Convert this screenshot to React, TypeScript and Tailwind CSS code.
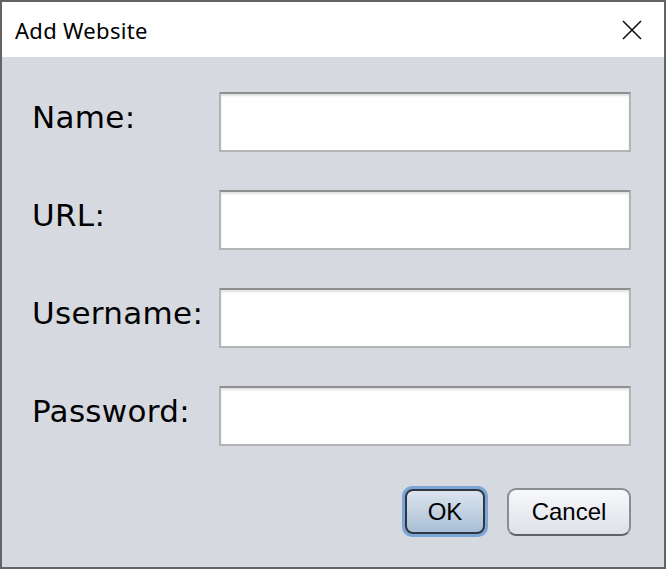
import React, { useState } from 'react';

const fields = ['Name:', 'URL:', 'Username:', 'Password:'];

const App: React.FC = () => {
  const [values, setValues] = useState<string[]>(['', '', '', '']);

  return (
    <div className="w-[666px] h-[569px] flex flex-col border-2 border-[#646464] bg-[#d6d9e0]">
      {/* title bar */}
      <div className="h-[55px] bg-white flex items-center justify-between pl-[13px] pr-[20px]">
        <span className="pt-[2px] text-[22px] text-black tracking-[0.3px] font-['Noto_Sans',sans-serif]">Add Website</span>
        <button className="w-[24px] h-[24px] flex items-center justify-center">
          <svg width="20" height="20" viewBox="0 0 20 20">
            <path d="M1 1 L19 19 M19 1 L1 19" stroke="#111" strokeWidth="1.6" />
          </svg>
        </button>
      </div>

      <div className="flex-1 flex flex-col pt-[35px] pl-[30px] pr-[33px]">
        <div className="flex flex-col gap-[38px]">
          {fields.map((label, i) => (
            <div key={label} className="flex items-center">
              <span className="w-[187px] pb-[10px] text-[31px] leading-[36px] text-black font-['DejaVu_Sans',sans-serif] tracking-[0.3px]">
                {label}
              </span>
              <input
                value={values[i]}
                onChange={(e) => setValues(values.map((v, j) => (j === i ? e.target.value : v)))}
                className="w-[412px] h-[60px] bg-white border-2 border-[#b4b4b4] border-t-[#8f8f8f] shadow-[inset_0_2px_2px_rgba(0,0,0,0.12)] outline-none px-2 text-[20px]"
              />
            </div>
          ))}
        </div>

        <div className="flex justify-end items-center gap-[19px] mt-[40px]">
          <div className="rounded-[10px] p-[3px] bg-[#7ba6d6]">
            <button className="w-[80px] h-[45px] rounded-[8px] border-2 border-[#2f3742] bg-gradient-to-b from-[#dce4ee] to-[#a9bfd5] text-[24px] text-black font-['Liberation_Sans',sans-serif]">
              OK
            </button>
          </div>
          <button className="w-[124px] h-[48px] rounded-[9px] border-2 border-[#8a8d92] border-b-[#5e6166] bg-gradient-to-b from-[#f7f8fa] to-[#dde1e8] text-[24px] text-black font-['Liberation_Sans',sans-serif]">
            Cancel
          </button>
        </div>
      </div>
    </div>
  );
};

export default App;
